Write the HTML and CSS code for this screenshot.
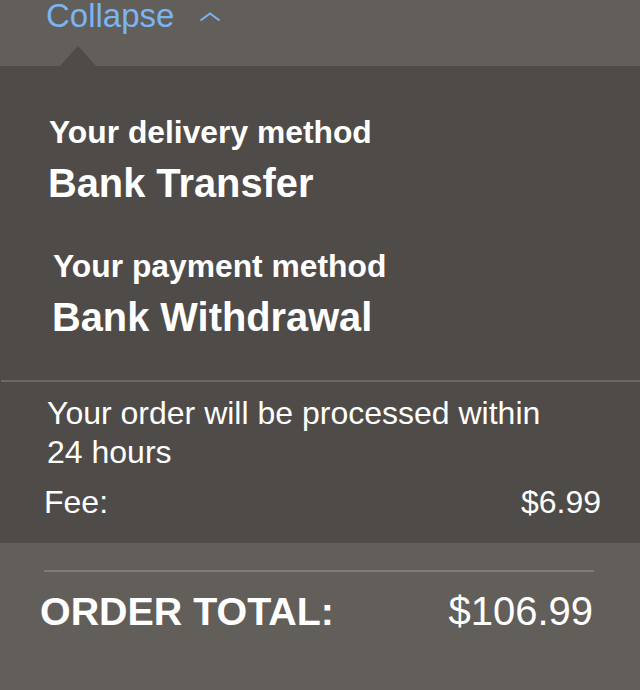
FILE: index.html
```html
<!DOCTYPE html>
<html>
<head>
<meta charset="utf-8">
<link rel="stylesheet" href="styles.css">
</head>
<body>
<div class="header">
  <span class="collapse">Collapse</span>
  <svg class="chevron" width="22" height="10" viewBox="0 0 22 10"><polyline points="1.5,8.5 11,1.5 20.5,8.5" fill="none" stroke="#7ab5f2" stroke-width="2"/></svg>
</div>
<div class="panel">
  <div class="pointer"></div>
  <div class="method method-delivery">
    <div class="method-label">Your delivery method</div>
    <div class="method-value">Bank Transfer</div>
  </div>
  <div class="method method-payment">
    <div class="method-label">Your payment method</div>
    <div class="method-value">Bank Withdrawal</div>
  </div>
  <div class="divider"></div>
  <div class="info">
    <div class="info-text">Your order will be processed within<br>24 hours</div>
    <div class="fee-row"><span>Fee:</span><span>$6.99</span></div>
  </div>
</div>
<div class="totals">
  <div class="totals-line"></div>
  <div class="total-row"><span class="total-label">ORDER TOTAL:</span><span class="total-value">$106.99</span></div>
</div>
</body>
</html>
```
FILE: styles.css
```css
html, body {
  margin: 0;
  padding: 0;
}
body {
  background: #625e5a;
  font-family: "Liberation Sans", Arial, sans-serif;
  color: #ffffff;
  width: 640px;
  height: 690px;
  overflow: hidden;
}
.header {
  height: 66px;
  display: flex;
  align-items: flex-start;
  padding-left: 46px;
  box-sizing: border-box;
}
.collapse {
  color: #7ab5f2;
  font-size: 33px;
  line-height: 32px;
}
.chevron {
  margin-left: 25px;
  margin-top: 12px;
}
.panel {
  position: relative;
  background: #4f4b48;
  padding-top: 48px;
  padding-bottom: 21px;
}
.pointer {
  position: absolute;
  left: 60px;
  top: -20px;
  width: 0;
  height: 0;
  border-left: 18px solid transparent;
  border-right: 18px solid transparent;
  border-bottom: 20px solid #4f4b48;
}
.method-delivery {
  padding-left: 49px;
}
.method-payment {
  padding-left: 53px;
  margin-top: 43px;
}
.method-label {
  font-weight: bold;
  font-size: 31.8px;
  line-height: 36px;
}
.method-value {
  font-weight: bold;
  font-size: 39.8px;
  line-height: 44px;
  margin-top: 11px;
  margin-left: -1px;
}
.divider {
  height: 2px;
  background: #6b6763;
  margin-top: 41px;
  margin-left: 1px;
}
.info {
  padding-top: 12px;
}
.info-text {
  font-size: 32px;
  line-height: 39px;
  padding-left: 47px;
}
.fee-row {
  display: flex;
  justify-content: space-between;
  font-size: 32px;
  line-height: 39px;
  margin-top: 11px;
  padding-left: 44px;
  padding-right: 39px;
}
.totals {
  padding: 27px 46px 0 44px;
}
.totals-line {
  height: 2px;
  background: #7f7b78;
}
.total-row {
  display: flex;
  justify-content: space-between;
  align-items: baseline;
  margin-top: 17px;
  margin-left: -4px;
  margin-right: 1px;
  line-height: 44px;
}
.total-label {
  font-weight: bold;
  font-size: 39.4px;
}
.total-value {
  font-size: 40px;
}
```
